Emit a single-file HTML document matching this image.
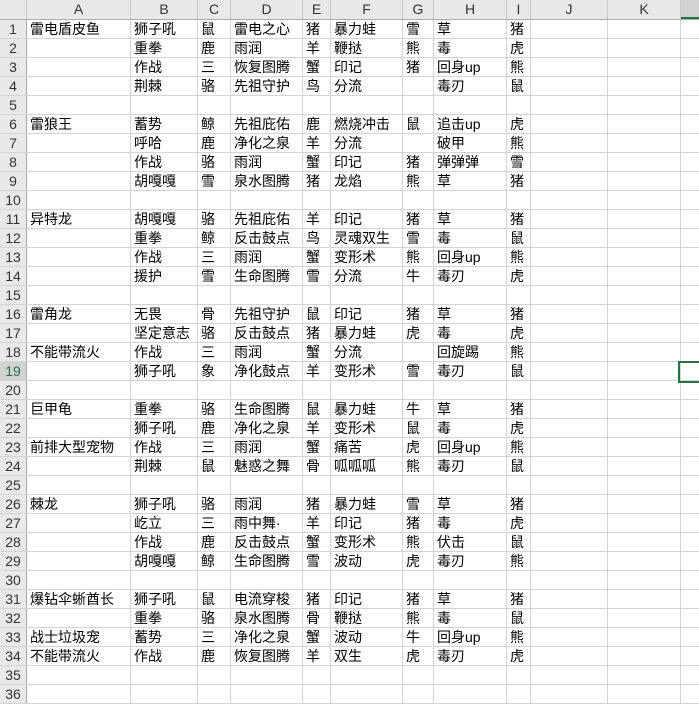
<!DOCTYPE html>
<html><head><meta charset="utf-8"><style>
*{margin:0;padding:0;box-sizing:border-box}
body{width:699px;height:697px;overflow:hidden;background:#fff;font-family:"Liberation Sans","Noto Sans CJK SC",sans-serif;font-size:14px;color:#000}
.r{display:flex;width:720px;height:19px;border-bottom:1px solid #d4d4d4;white-space:nowrap}
.r>div{flex:none;border-right:1px solid #d4d4d4;height:18px;line-height:18px;padding-left:3px;overflow:visible}
.r>div:nth-child(1){width:27px;background:#e9e9e9;border-right:1px solid #ababab;text-align:center;padding:0;color:#333;font-size:14px}
.r>div:nth-child(2){width:104px}
.r>div:nth-child(3){width:67px}
.r>div:nth-child(4){width:33px}
.r>div:nth-child(5){width:72px}
.r>div:nth-child(6){width:28px}
.r>div:nth-child(7){width:72px}
.r>div:nth-child(8){width:31px}
.r>div:nth-child(9){width:73px}
.r>div:nth-child(10){width:24px}
.r>div:nth-child(11){width:77px}
.r>div:nth-child(12){width:73px}
.r>div:nth-child(13){width:40px;border-right:none}
.h{height:20px;border-bottom:1px solid #ababab;background:#e9e9e9}
.h>div{height:19px;line-height:19px;text-align:center;padding:0!important;border-right:1px solid #c8c8c8!important;color:#333;font-size:14px}
.h>div:nth-child(13){background:#d2d2d2;border-bottom:2px solid #217346}
.sel>div:nth-child(1){color:#217346;background:#d2d2d2}
#box{position:absolute;left:678px;top:361px;width:30px;height:22px;border:2px solid #217346}
</style></head><body>
<div class="r h"><div></div><div>A</div><div>B</div><div>C</div><div>D</div><div>E</div><div>F</div><div>G</div><div>H</div><div>I</div><div>J</div><div>K</div><div></div></div>
<div class="r"><div>1</div><div>雷电盾皮鱼</div><div>狮子吼</div><div>鼠</div><div>雷电之心</div><div>猪</div><div>暴力蛙</div><div>雪</div><div>草</div><div>猪</div><div></div><div></div><div></div></div>
<div class="r"><div>2</div><div></div><div>重拳</div><div>鹿</div><div>雨润</div><div>羊</div><div>鞭挞</div><div>熊</div><div>毒</div><div>虎</div><div></div><div></div><div></div></div>
<div class="r"><div>3</div><div></div><div>作战</div><div>三</div><div>恢复图腾</div><div>蟹</div><div>印记</div><div>猪</div><div>回身up</div><div>熊</div><div></div><div></div><div></div></div>
<div class="r"><div>4</div><div></div><div>荆棘</div><div>骆</div><div>先祖守护</div><div>鸟</div><div>分流</div><div></div><div>毒刃</div><div>鼠</div><div></div><div></div><div></div></div>
<div class="r"><div>5</div><div></div><div></div><div></div><div></div><div></div><div></div><div></div><div></div><div></div><div></div><div></div><div></div></div>
<div class="r"><div>6</div><div>雷狼王</div><div>蓄势</div><div>鲸</div><div>先祖庇佑</div><div>鹿</div><div>燃烧冲击</div><div>鼠</div><div>追击up</div><div>虎</div><div></div><div></div><div></div></div>
<div class="r"><div>7</div><div></div><div>呼哈</div><div>鹿</div><div>净化之泉</div><div>羊</div><div>分流</div><div></div><div>破甲</div><div>熊</div><div></div><div></div><div></div></div>
<div class="r"><div>8</div><div></div><div>作战</div><div>骆</div><div>雨润</div><div>蟹</div><div>印记</div><div>猪</div><div>弹弹弹</div><div>雪</div><div></div><div></div><div></div></div>
<div class="r"><div>9</div><div></div><div>胡嘎嘎</div><div>雪</div><div>泉水图腾</div><div>猪</div><div>龙焰</div><div>熊</div><div>草</div><div>猪</div><div></div><div></div><div></div></div>
<div class="r"><div>10</div><div></div><div></div><div></div><div></div><div></div><div></div><div></div><div></div><div></div><div></div><div></div><div></div></div>
<div class="r"><div>11</div><div>异特龙</div><div>胡嘎嘎</div><div>骆</div><div>先祖庇佑</div><div>羊</div><div>印记</div><div>猪</div><div>草</div><div>猪</div><div></div><div></div><div></div></div>
<div class="r"><div>12</div><div></div><div>重拳</div><div>鲸</div><div>反击鼓点</div><div>鸟</div><div>灵魂双生</div><div>雪</div><div>毒</div><div>鼠</div><div></div><div></div><div></div></div>
<div class="r"><div>13</div><div></div><div>作战</div><div>三</div><div>雨润</div><div>蟹</div><div>变形术</div><div>熊</div><div>回身up</div><div>熊</div><div></div><div></div><div></div></div>
<div class="r"><div>14</div><div></div><div>援护</div><div>雪</div><div>生命图腾</div><div>雪</div><div>分流</div><div>牛</div><div>毒刃</div><div>虎</div><div></div><div></div><div></div></div>
<div class="r"><div>15</div><div></div><div></div><div></div><div></div><div></div><div></div><div></div><div></div><div></div><div></div><div></div><div></div></div>
<div class="r"><div>16</div><div>雷角龙</div><div>无畏</div><div>骨</div><div>先祖守护</div><div>鼠</div><div>印记</div><div>猪</div><div>草</div><div>猪</div><div></div><div></div><div></div></div>
<div class="r"><div>17</div><div></div><div>坚定意志</div><div>骆</div><div>反击鼓点</div><div>猪</div><div>暴力蛙</div><div>虎</div><div>毒</div><div>虎</div><div></div><div></div><div></div></div>
<div class="r"><div>18</div><div>不能带流火</div><div>作战</div><div>三</div><div>雨润</div><div>蟹</div><div>分流</div><div></div><div>回旋踢</div><div>熊</div><div></div><div></div><div></div></div>
<div class="r sel"><div>19</div><div></div><div>狮子吼</div><div>象</div><div>净化鼓点</div><div>羊</div><div>变形术</div><div>雪</div><div>毒刃</div><div>鼠</div><div></div><div></div><div></div></div>
<div class="r"><div>20</div><div></div><div></div><div></div><div></div><div></div><div></div><div></div><div></div><div></div><div></div><div></div><div></div></div>
<div class="r"><div>21</div><div>巨甲龟</div><div>重拳</div><div>骆</div><div>生命图腾</div><div>鼠</div><div>暴力蛙</div><div>牛</div><div>草</div><div>猪</div><div></div><div></div><div></div></div>
<div class="r"><div>22</div><div></div><div>狮子吼</div><div>鹿</div><div>净化之泉</div><div>羊</div><div>变形术</div><div>鼠</div><div>毒</div><div>虎</div><div></div><div></div><div></div></div>
<div class="r"><div>23</div><div>前排大型宠物</div><div>作战</div><div>三</div><div>雨润</div><div>蟹</div><div>痛苦</div><div>虎</div><div>回身up</div><div>熊</div><div></div><div></div><div></div></div>
<div class="r"><div>24</div><div></div><div>荆棘</div><div>鼠</div><div>魅惑之舞</div><div>骨</div><div>呱呱呱</div><div>熊</div><div>毒刃</div><div>鼠</div><div></div><div></div><div></div></div>
<div class="r"><div>25</div><div></div><div></div><div></div><div></div><div></div><div></div><div></div><div></div><div></div><div></div><div></div><div></div></div>
<div class="r"><div>26</div><div>棘龙</div><div>狮子吼</div><div>骆</div><div>雨润</div><div>猪</div><div>暴力蛙</div><div>雪</div><div>草</div><div>猪</div><div></div><div></div><div></div></div>
<div class="r"><div>27</div><div></div><div>屹立</div><div>三</div><div>雨中舞·</div><div>羊</div><div>印记</div><div>猪</div><div>毒</div><div>虎</div><div></div><div></div><div></div></div>
<div class="r"><div>28</div><div></div><div>作战</div><div>鹿</div><div>反击鼓点</div><div>蟹</div><div>变形术</div><div>熊</div><div>伏击</div><div>鼠</div><div></div><div></div><div></div></div>
<div class="r"><div>29</div><div></div><div>胡嘎嘎</div><div>鲸</div><div>生命图腾</div><div>雪</div><div>波动</div><div>虎</div><div>毒刃</div><div>熊</div><div></div><div></div><div></div></div>
<div class="r"><div>30</div><div></div><div></div><div></div><div></div><div></div><div></div><div></div><div></div><div></div><div></div><div></div><div></div></div>
<div class="r"><div>31</div><div>爆钻伞蜥酋长</div><div>狮子吼</div><div>鼠</div><div>电流穿梭</div><div>猪</div><div>印记</div><div>猪</div><div>草</div><div>猪</div><div></div><div></div><div></div></div>
<div class="r"><div>32</div><div></div><div>重拳</div><div>骆</div><div>泉水图腾</div><div>骨</div><div>鞭挞</div><div>熊</div><div>毒</div><div>鼠</div><div></div><div></div><div></div></div>
<div class="r"><div>33</div><div>战士垃圾宠</div><div>蓄势</div><div>三</div><div>净化之泉</div><div>蟹</div><div>波动</div><div>牛</div><div>回身up</div><div>熊</div><div></div><div></div><div></div></div>
<div class="r"><div>34</div><div>不能带流火</div><div>作战</div><div>鹿</div><div>恢复图腾</div><div>羊</div><div>双生</div><div>虎</div><div>毒刃</div><div>虎</div><div></div><div></div><div></div></div>
<div class="r"><div>35</div><div></div><div></div><div></div><div></div><div></div><div></div><div></div><div></div><div></div><div></div><div></div><div></div></div>
<div class="r"><div>36</div><div></div><div></div><div></div><div></div><div></div><div></div><div></div><div></div><div></div><div></div><div></div><div></div></div>
<div id="box"></div>
</body></html>
